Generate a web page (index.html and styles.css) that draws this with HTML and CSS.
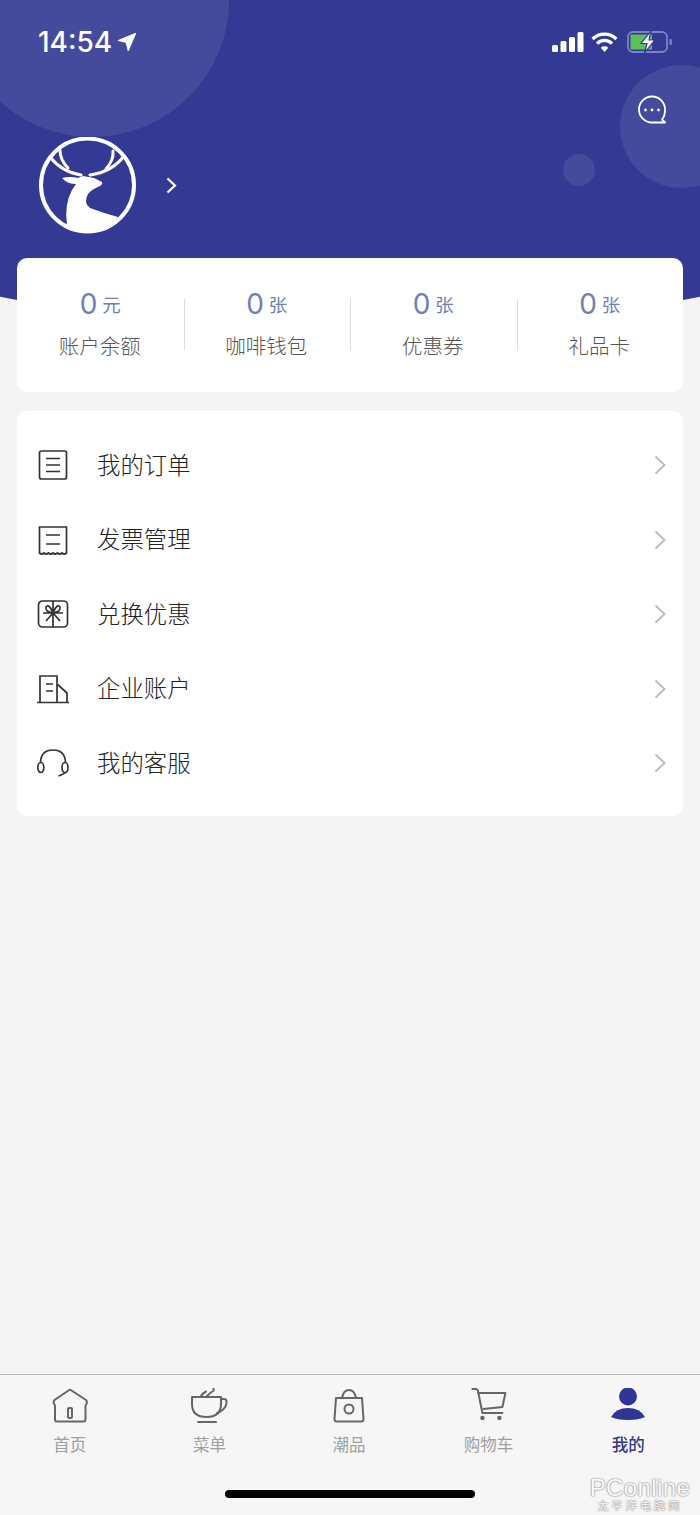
FILE: index.html
```html
<!DOCTYPE html>
<html>
<head>
	<title>我的</title>
	<link rel="stylesheet" href="styles.css">
</head>
<body>
	<div class="page">
		<header class="top">
			<div class="blob blob-left"></div>
			<div class="blob blob-right"></div>
			<div class="blob blob-small"></div>

			<div class="status">
				<div class="clock">
					14:54
					<svg class="locate" viewBox="0 0 18 18"><path d="M18 0 L10.2 18 L8 9.4 L0 7.6 Z" fill="#fff" stroke="#fff" stroke-width="0.8" stroke-linejoin="round"/></svg>
				</div>
				<div class="status-icons">
					<svg width="32" height="20" viewBox="0 0 32 20" fill="#fff">
						<rect x="0" y="13" width="6" height="7" rx="1.5"/>
						<rect x="8.5" y="9" width="6" height="11" rx="1.5"/>
						<rect x="17" y="5" width="6" height="15" rx="1.5"/>
						<rect x="25.5" y="0" width="6" height="20" rx="1.5"/>
					</svg>
					<svg width="27" height="20" viewBox="0 0 27 20" fill="none" stroke="#fff" stroke-width="3.2">
						<path d="M1.6 7 A17 17 0 0 1 25.4 7"/>
						<path d="M6 11.6 A10.5 10.5 0 0 1 21 11.6"/>
						<path d="M13.5 20 L9.8 15.8 A5.4 5.4 0 0 1 17.2 15.8 Z" fill="#fff" stroke="none"/>
					</svg>
					<svg class="battery" width="46" height="22" viewBox="0 0 46 22">
						<rect x="1" y="1" width="39" height="20" rx="5" fill="none" stroke="#7b83c6" stroke-width="1.8"/>
						<path d="M3.5 3.5 H25 V18.5 H3.5 Z" fill="#5dbf57"/>
						<rect x="42.5" y="8" width="2.4" height="6" rx="1" fill="#7b83c6"/>
						<path d="M24 0 L14 12.5 H20 L17.5 22 L28 9 H22 Z" fill="#fff" stroke="#343a94" stroke-width="1.2"/>
					</svg>
				</div>
			</div>

			<div class="msg-row">
				<svg class="msg" width="30" height="30" viewBox="0 0 30 30" fill="none" stroke="#fff" stroke-width="1.8">
					<path d="M28 27.5 H15 A13 13 0 1 1 28 15 Q28 21 25 24.5 Z" stroke-linejoin="round"/>
					<circle cx="8.5" cy="15" r="1.4" fill="#fff" stroke="none"/>
					<circle cx="15" cy="15" r="1.4" fill="#fff" stroke="none"/>
					<circle cx="21.5" cy="15" r="1.4" fill="#fff" stroke="none"/>
				</svg>
			</div>

			<div class="profile">
				<svg width="97" height="97" viewBox="39 137 97 97">
					<circle cx="87.5" cy="185" r="46.5" fill="none" stroke="#fff" stroke-width="4"/>
					<g fill="none" stroke="#fff" stroke-width="3" stroke-linecap="round">
						<path d="M50 157 Q62 172 81 175"/>
						<path d="M60 150 Q60 160 68 168"/>
						<path d="M124 156 Q112 172 90 175"/>
						<path d="M113 151 Q114 160 106 169"/>
					</g>
					<path d="M62 178 Q70 176 78 178 L83 176 L94 178 L102 182 Q103 184 100 186 Q92 189 88 194 Q83 203 90 208 Q103 213 118 217 Q105 232 87 232 Q76 232 67 225 Q64 205 72 190 L76 184 Q67 184 62 178 Z" fill="#fff"/>
				</svg>
				<svg class="profile-arrow" width="11" height="17" viewBox="0 0 11 17" fill="none" stroke="#fff" stroke-width="2.2">
					<path d="M1.5 1.5 L9 8.5 L1.5 15.5"/>
				</svg>
			</div>
		</header>

		<section class="card stats">
			<div class="stat">
				<div class="stat-value"><b>0</b><span>元</span></div>
				<div class="stat-label">账户余额</div>
			</div>
			<div class="stat">
				<div class="stat-value"><b>0</b><span>张</span></div>
				<div class="stat-label">咖啡钱包</div>
			</div>
			<div class="stat">
				<div class="stat-value"><b>0</b><span>张</span></div>
				<div class="stat-label">优惠券</div>
			</div>
			<div class="stat">
				<div class="stat-value"><b>0</b><span>张</span></div>
				<div class="stat-label">礼品卡</div>
			</div>
		</section>

		<section class="card menu">
			<div class="menu-row">
				<svg class="menu-icon" viewBox="0 0 32 32">
					<rect x="2.5" y="2" width="27" height="28" rx="2"/>
					<path d="M9 9.5 H23 M9 16 H23 M9 22.5 H23"/>
				</svg>
				<span class="menu-text">我的订单</span>
				<svg class="chevron" viewBox="0 0 12 20"><path d="M1.5 1.5 L10.5 10 L1.5 18.5"/></svg>
			</div>
			<div class="menu-row">
				<svg class="menu-icon" viewBox="0 0 32 32">
					<path d="M2.5 29 V3 H29.5 V29 Q27.2 31 25 29 Q22.8 31 20.5 29 Q18.2 31 16 29 Q13.8 31 11.5 29 Q9.2 31 7 29 Q4.8 31 2.5 29 Z"/>
					<path d="M9 11 H23 M9 20 H23"/>
				</svg>
				<span class="menu-text">发票管理</span>
				<svg class="chevron" viewBox="0 0 12 20"><path d="M1.5 1.5 L10.5 10 L1.5 18.5"/></svg>
			</div>
			<div class="menu-row">
				<svg class="menu-icon" viewBox="0 0 32 32">
					<rect x="1.5" y="3" width="29" height="26" rx="4"/>
					<path d="M16 3 V29 M6 15 H26 M16 15 Q8 14 9 9 Q12 5 16 15 Q20 5 23 9 Q24 14 16 15 M16 15 L9 23 M16 15 L23 23"/>
				</svg>
				<span class="menu-text">兑换优惠</span>
				<svg class="chevron" viewBox="0 0 12 20"><path d="M1.5 1.5 L10.5 10 L1.5 18.5"/></svg>
			</div>
			<div class="menu-row">
				<svg class="menu-icon" viewBox="0 0 32 32">
					<path d="M0 29.5 H32 M3 29 V3 H20 V29 M20 11 L30 20 V29"/>
					<path d="M9 11 H16 M9 18 H16"/>
				</svg>
				<span class="menu-text">企业账户</span>
				<svg class="chevron" viewBox="0 0 12 20"><path d="M1.5 1.5 L10.5 10 L1.5 18.5"/></svg>
			</div>
			<div class="menu-row">
				<svg class="menu-icon" viewBox="0 0 32 32">
					<path d="M3.5 15.5 Q4 3 16 3 Q28 3 28.5 15.5"/>
					<ellipse cx="3.8" cy="20.5" rx="3" ry="5"/>
					<ellipse cx="28" cy="20.5" rx="3" ry="5"/>
					<path d="M28.5 25.5 Q27 27 21.5 29"/>
				</svg>
				<span class="menu-text">我的客服</span>
				<svg class="chevron" viewBox="0 0 12 20"><path d="M1.5 1.5 L10.5 10 L1.5 18.5"/></svg>
			</div>
		</section>

		<footer class="tabbar">
			<nav class="tabs">
				<div class="tab">
					<svg class="tab-icon" viewBox="0 0 38 36">
						<path d="M19 1.5 L35 12 Q36.5 13.5 35.5 16 L34.5 17.5 V31.5 Q34.5 33.5 32.5 33.5 H6 Q4 33.5 4 31.5 V17.5 L3 16 Q2 13.5 3.5 12 Z"/>
						<rect x="17" y="20" width="4" height="10" rx="1"/>
					</svg>
					<span>首页</span>
				</div>
				<div class="tab">
					<svg class="tab-icon" viewBox="0 0 38 36">
						<path d="M2 9 H31 V16 Q31 29 16.5 29 Q2 29 2 16 Z"/>
						<path d="M31 11 H34 Q37 11 36.5 15 Q35.5 22 27 25"/>
						<path d="M8 34 H26"/>
						<path d="M11 8 Q13 5 16 3.5 M17 8 Q20 5 23 3 Q24 2 23.5 0.5"/>
					</svg>
					<span>菜单</span>
				</div>
				<div class="tab">
					<svg class="tab-icon" viewBox="0 0 38 36">
						<path d="M6 10 H32 L33.5 31 Q33.5 33.5 31.5 33.5 H6.5 Q4.5 33.5 4.5 31 Z"/>
						<path d="M12 10 Q13.5 2 19 2 Q24.5 2 26 10"/>
						<circle cx="19" cy="21" r="4.5"/>
					</svg>
					<span>潮品</span>
				</div>
				<div class="tab">
					<svg class="tab-icon" viewBox="0 0 38 36">
						<path d="M2.4 1 H6 Q7.5 1 8 3 L12.4 25 H32.4"/>
						<path d="M8 5 H35.4 L32.4 19 L13.4 21"/>
						<circle cx="12.4" cy="30" r="2.2" class="dot"/>
						<circle cx="29.4" cy="30" r="2.2" class="dot"/>
					</svg>
					<span>购物车</span>
				</div>
				<div class="tab tab-active">
					<svg class="tab-icon" viewBox="0 0 38 36">
						<circle cx="19" cy="8.5" r="9"/>
						<path d="M2 29 Q7 20 19 20 Q31 20 36 29 Q30 32 19 32 Q8 32 2 29 Z"/>
					</svg>
					<span>我的</span>
				</div>
			</nav>
			<div class="home-bar"></div>
		</footer>

		<div class="watermark">
			<div class="wm-name">PConline</div>
			<div class="wm-sub">太平洋电脑网</div>
		</div>
	</div>
</body>
</html>
```

FILE: styles.css
```css
* {
	box-sizing: border-box;
}

body {
	margin: 0;
	overflow: hidden;
	background: #f4f4f4;
	color: #333;
	font-family: "Noto Sans CJK SC", "Noto Sans", sans-serif;
}

.page {
	position: relative;
	display: flex;
	flex-direction: column;
	width: 700px;
	height: 1515px;
	overflow: hidden;
}

/* blue header */
.top {
	position: relative;
	height: 340px;
	padding: 0 39px;
	background: #343a94;
	clip-path: ellipse(800px 330px at 350px 0);
}

.blob {
	position: absolute;
	border-radius: 50%;
	background: #454b9c;
}

.blob-left {
	left: -45px;
	top: -137px;
	width: 274px;
	height: 274px;
}

.blob-right {
	left: 620px;
	top: 65px;
	width: 123px;
	height: 123px;
}

.blob-small {
	left: 563px;
	top: 154px;
	width: 32px;
	height: 32px;
}

.status {
	position: relative;
	display: flex;
	justify-content: space-between;
	align-items: center;
	height: 84px;
	color: #fff;
}

.clock {
	display: flex;
	align-items: center;
	gap: 6px;
	margin-left: -1px;
	font-family: Inter, sans-serif;
	font-size: 28px;
	font-weight: 500;
}

.locate {
	width: 18px;
	height: 18px;
}

.status-icons {
	display: flex;
	align-items: center;
	gap: 7px;
	margin-right: -12px;
	margin-top: -1px;
}

.battery {
	margin-left: 2px;
}

.msg-row {
	position: relative;
	display: flex;
	justify-content: flex-end;
	height: 0;
	margin-right: -6px;
}

.msg {
	margin-top: 11px;
}

.profile {
	position: relative;
	display: flex;
	align-items: center;
	gap: 30px;
	padding-top: 53px;
}

/* cards */
.card {
	position: relative;
	margin: 0 17px;
	border-radius: 10px;
	background: #fff;
}

.stats {
	display: flex;
	height: 134px;
	margin-top: -82px;
	padding-top: 28px;
}

.stat {
	position: relative;
	flex: 1;
	text-align: center;
}

.stat + .stat::before {
	content: "";
	position: absolute;
	left: 0;
	top: 13px;
	width: 1px;
	height: 51px;
	background: #dcdcdc;
}

.stat-value {
	display: flex;
	justify-content: center;
	align-items: center;
	gap: 5px;
	height: 36px;
	color: #6f80b2;
	font-size: 18.5px;
}

.stat-value b {
	font-family: Inter, sans-serif;
	font-size: 28px;
	font-weight: 400;
}

.stat-label {
	margin-top: 8px;
	padding-right: 1px;
	color: #555;
	font-size: 20.5px;
	font-weight: 300;
	line-height: 30px;
}

.menu {
	height: 405px;
	margin-top: 19px;
	padding-top: 17px;
}

.menu-row {
	display: flex;
	align-items: center;
	height: 74.5px;
	padding: 0 17px 0 20px;
}

.menu-icon {
	width: 32px;
	height: 32px;
	fill: none;
	stroke: #333;
	stroke-width: 1.7;
}

.menu-text {
	flex: 1;
	margin-left: 28px;
	padding-bottom: 3px;
	color: #222;
	font-size: 23.4px;
	font-weight: 300;
}

.chevron {
	width: 12px;
	height: 20px;
	fill: none;
	stroke: #bdbdbd;
	stroke-width: 2;
}

/* bottom tabs */
.tabbar {
	margin-top: auto;
	height: 141px;
	border-top: 1px solid #bbb;
	background: #f6f6f6;
}

.tabs {
	display: flex;
	padding: 13px 2px 0 0;
}

.tab {
	display: flex;
	flex: 1;
	flex-direction: column;
	align-items: center;
	color: #a0a0a0;
	font-size: 16.5px;
	line-height: 24px;
}

.tab span {
	margin-top: 8px;
}

.tab-icon {
	width: 38px;
	height: 36px;
	fill: none;
	stroke: #666;
	stroke-width: 2;
	stroke-linecap: round;
	stroke-linejoin: round;
}

.tab-icon .dot {
	fill: #666;
	stroke: none;
}

.tab-active {
	color: #343a80;
	font-weight: 500;
}

.tab-active .tab-icon {
	fill: #2f3796;
	stroke: none;
}

.home-bar {
	width: 250px;
	height: 8px;
	margin: 34px auto 0;
	border-radius: 4px;
	background: #000;
}

.watermark {
	position: absolute;
	right: 8px;
	top: 1476px;
	width: 104px;
	color: #fbfbfb;
	text-align: center;
	text-shadow: 0 0 2px #777, 0 0 1px #999;
}

.wm-name {
	font-family: "Liberation Sans", sans-serif;
	font-size: 24px;
	line-height: 23px;
	letter-spacing: 0.4px;
}

.wm-sub {
	font-size: 11px;
	line-height: 12px;
	letter-spacing: 3.2px;
}
```
